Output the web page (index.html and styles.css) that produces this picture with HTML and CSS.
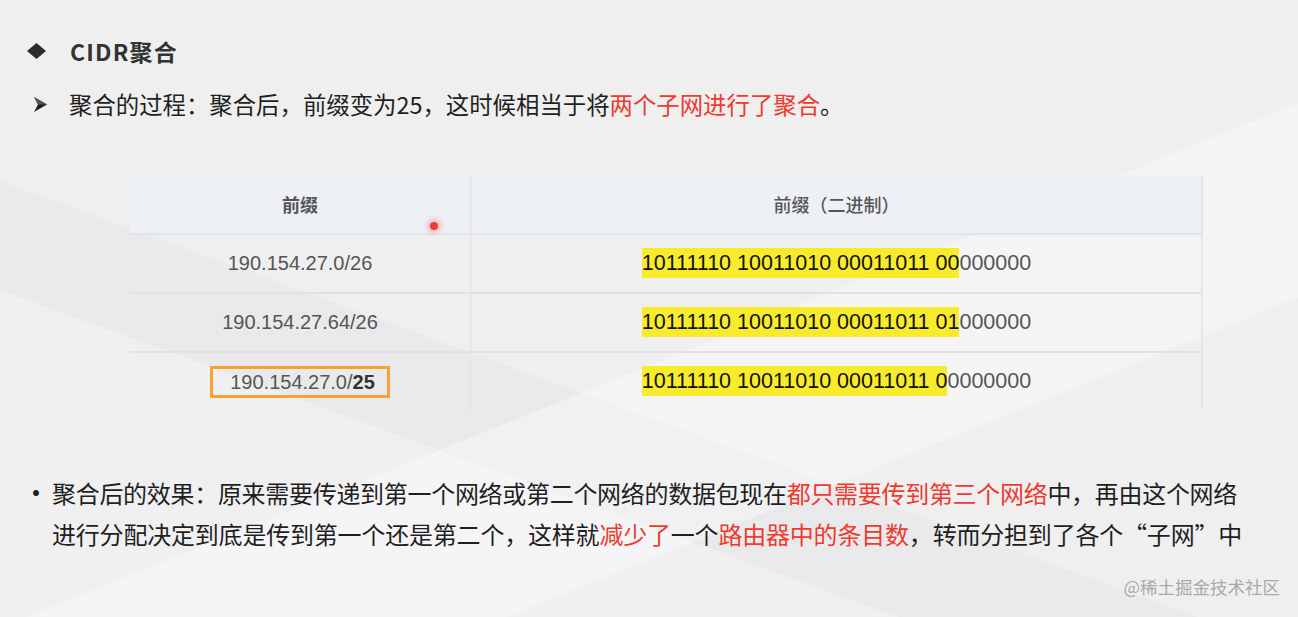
FILE: index.html
```html
<!DOCTYPE html>
<html lang="zh-CN">
<head>
  <meta charset="UTF-8" />
  <title>CIDR聚合</title>
  <link rel="stylesheet" href="styles.css">
</head>
<body>
  <div class="slide">
    <h1 class="titulo">
      <svg class="rombo" width="19" height="16" viewBox="0 0 19 16"><polygon points="9.5,0 19,8 9.5,16 0,8" fill="#2b2b2b"/></svg>
      <span>CIDR聚合</span>
    </h1>

    <p class="linea">
      <svg class="flecha" width="13" height="15" viewBox="0 0 13 15"><path d="M0 0 L13 7.5 L0 15 L4 7.5 Z" fill="#1e1e1e"/><path d="M0 0 L13 7.5 L4 7.5 Z" fill="#555"/></svg>
      <span>聚合的过程：聚合后，前缀变为25，这时候相当于将<span class="rojo">两个子网进行了聚合</span>。</span>
    </p>

    <table class="tabla">
      <tr>
        <th class="col-prefijo">前缀<i class="puntero"></i></th>
        <th>前缀（二进制）</th>
      </tr>
      <tr>
        <td>190.154.27.0/26</td>
        <td class="bin"><span class="marca">10111110 10011010 00011011 00</span>000000</td>
      </tr>
      <tr>
        <td>190.154.27.64/26</td>
        <td class="bin"><span class="marca">10111110 10011010 00011011 01</span>000000</td>
      </tr>
      <tr>
        <td><span class="caja">190.154.27.0/<b>25</b></span></td>
        <td class="bin"><span class="marca">10111110 10011010 00011011 0</span>0000000</td>
      </tr>
    </table>

    <div class="efecto">
      <span class="vineta">•</span>
      <p>
        <span class="l1">聚合后的效果：原来需要传递到第一个网络或第二个网络的数据包现在<span class="rojo">都只需要传到第三个网络</span>中，再由这个网络</span><br>
        <span class="l2">进行分配决定到底是传到第一个还是第二个，这样就<span class="rojo">减少了</span>一个<span class="rojo">路由器中的条目数</span>，转而分担到了各个“子网”中</span>
      </p>
    </div>

    <div class="marca-agua">@稀土掘金技术社区</div>
  </div>
</body>
</html>
```

FILE: styles.css
```css
body {
  margin: 0;
  background-color: #eeeeef;
  font-family: "Noto Sans CJK SC", "Noto Sans", sans-serif;
  color: #1f1f1f;
}

.slide {
  position: relative;
  width: 1298px;
  height: 617px;
  overflow: hidden;
  box-sizing: border-box;
  padding-top: 34px;
  background:
    linear-gradient(158deg, transparent 55%, rgba(255,255,255,0.35) 55%, rgba(255,255,255,0.35) 72%, transparent 72%),
    linear-gradient(20deg, rgba(255,255,255,0.3) 30%, transparent 30%),
    linear-gradient(200deg, transparent 60%, rgba(230,230,232,0.6) 60%),
    #efeff0;
}

.titulo {
  display: flex;
  align-items: center;
  height: 34px;
  margin: 0;
  padding-left: 27px;
  font-size: 23px;
  font-weight: bold;
  color: #333;
}

.titulo .rombo {
  margin-right: 24px;
}

.titulo span {
  letter-spacing: 1.2px;
}

.linea {
  display: flex;
  align-items: center;
  height: 34px;
  margin: 19px 0 0 0;
  padding-left: 34px;
  font-size: 23.4px;
}

.linea .flecha {
  margin-right: 22px;
}

.rojo {
  color: #ee3a2f;
}

.tabla {
  margin: 54px 0 0 130px;
  width: 1073px;
  border-collapse: collapse;
  font-family: "Liberation Sans", "Noto Sans CJK SC", sans-serif;
  border-right: 2px solid #e4e5e8;
}

.tabla th {
  position: relative;
  height: 58px;
  padding: 0;
  background-color: #edf1f5;
  font-family: "Noto Sans CJK SC", sans-serif;
  font-size: 18px;
  font-weight: bold;
  color: #555;
  border-bottom: 2px solid #e3e4e7;
}

.tabla th.col-prefijo {
  width: 340px;
  border-right: 2px solid #e6e7ea;
}

.tabla th:last-child {
  font-weight: 500;
}

.tabla td {
  height: 57px;
  padding: 0;
  text-align: center;
  font-size: 20px;
  color: #555;
  border-bottom: 2px solid #e2e2e5;
}

.tabla td.bin {
  font-size: 21.5px;
}

.tabla td:first-child {
  border-right: 2px solid #e6e7ea;
}

.tabla tr:last-child td {
  border-bottom: none;
}

.marca {
  background-color: #f8eb2b;
  color: #111;
  padding: 3px 0;
}

.caja {
  display: inline-block;
  padding: 2px 12px 2px 17px;
  border: 3px solid #f6a332;
  line-height: 22px;
}

.caja b {
  color: #333;
}

.puntero {
  position: absolute;
  right: 32px;
  bottom: 3px;
  width: 8px;
  height: 8px;
  border-radius: 50%;
  background-color: #f03a3a;
  box-shadow: 0 0 5px 3px rgba(240, 80, 80, 0.35);
}

.efecto {
  display: flex;
  margin-top: 62px;
  padding-left: 22px;
  font-size: 24px;
  line-height: 41px;
}

.efecto .vineta {
  width: 30px;
  font-size: 28px;
}

.efecto p {
  margin: 0;
}

.efecto .l1 {
  letter-spacing: -0.3px;
}

.efecto .l2 {
  letter-spacing: -0.2px;
}

.marca-agua {
  position: absolute;
  right: 18px;
  bottom: 18px;
  font-size: 17.5px;
  color: #a9a9ab;
}
```
